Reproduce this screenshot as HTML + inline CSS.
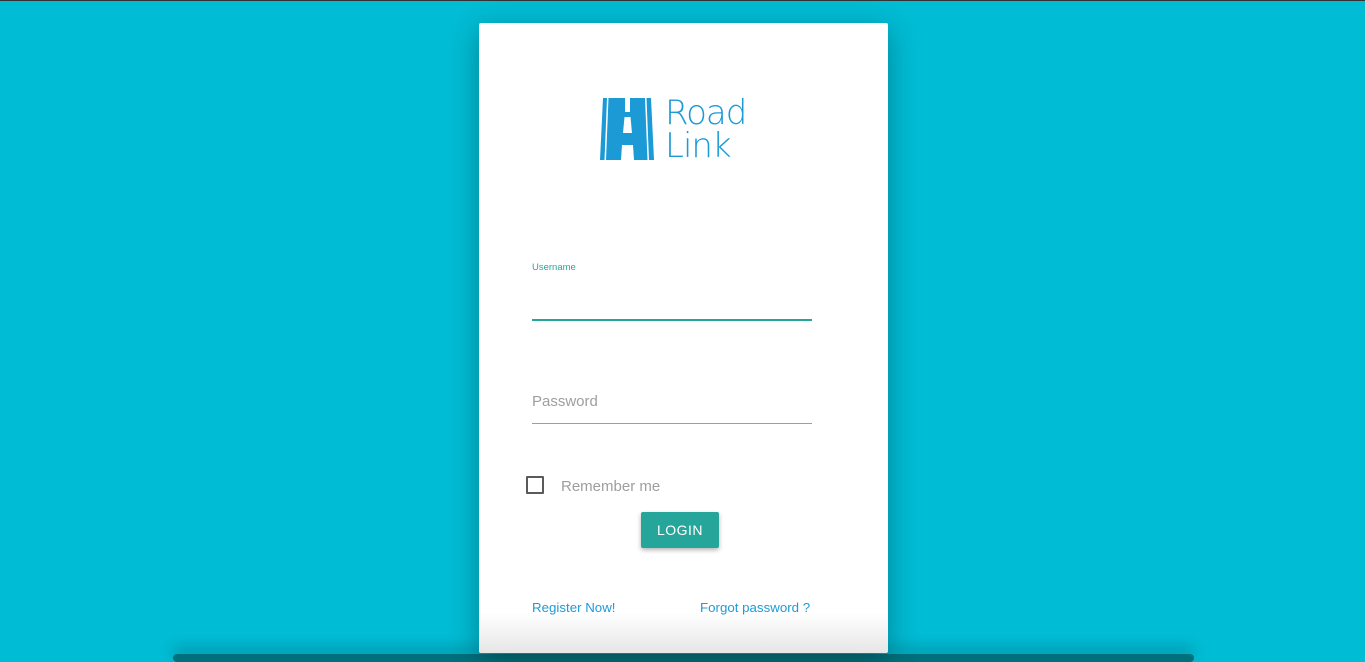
<!DOCTYPE html>
<html><head><style>
html,body{margin:0;padding:0}
body{width:1365px;height:659px;background:#00bcd4;position:relative;overflow:hidden;font-family:"Liberation Sans",sans-serif;border-top:1px solid #333;box-sizing:border-box}
.bar{position:absolute;left:173px;top:653px;width:1021px;height:8px;background:#00707c;border-radius:4px;box-shadow:0 -6px 14px rgba(0,0,0,.25)}
.card{position:absolute;left:479px;top:22px;width:409px;height:630px;background:linear-gradient(#fff 0,#fff 590px,#e6e6e6 630px);border-radius:2px;box-shadow:0 8px 30px rgba(0,0,0,.3)}
.logo{position:absolute;left:119px;top:74px}
.lt{position:absolute;font-family:"DejaVu Sans",sans-serif;font-size:34px;color:#1b9ad6;font-weight:200;letter-spacing:-1px;line-height:1}
.lab{position:absolute;left:53px;top:239px;font-size:9.5px;color:#26a69a}
.l1{position:absolute;left:53px;top:296px;width:280px;height:2px;background:#26a69a}
.pw{position:absolute;left:53px;top:370px;font-size:15px;color:#9e9e9e}
.l2{position:absolute;left:53px;top:400px;width:280px;height:1px;background:#9e9e9e}
.cb{position:absolute;left:47px;top:453px;width:14px;height:14px;border:2px solid #5a5a5a;border-radius:1px}
.rm{position:absolute;left:82px;top:455px;font-size:15px;color:#9e9e9e}
.btn{position:absolute;left:162px;top:489px;width:78px;height:36px;background:#26a69a;color:#fff;font-size:14px;text-align:center;line-height:36px;letter-spacing:.5px;border-radius:2px;box-shadow:0 2px 5px rgba(0,0,0,.3)}
.lk{position:absolute;top:577px;font-size:13.3px;color:#1e9bd7}
</style></head><body>
<div class="bar"></div>
<div class="card">
 <div class="logo">
  <svg width="58" height="64" viewBox="0 0 58 64" style="position:absolute;left:0;top:0">
   <polygon points="5,1 53,1 56,63 2,63" fill="#1b9ad6"/>
   <polygon points="9,1 10.5,1 8,63 6.5,63" fill="#fff"/>
   <polygon points="47,1 48.5,1 51,63 49.5,63" fill="#fff"/>
   <rect x="27" y="1" width="5" height="14" fill="#fff"/>
   <polygon points="26.5,20 32.5,20 34,36 25,36" fill="#fff"/>
   <polygon points="24,48 35,48 36,63 23,63" fill="#fff"/>
  </svg>
  <div class="lt" style="left:67px;top:-1px">Road</div>
  <div class="lt" style="left:67px;top:32px">Link</div>
 </div>
 <div class="lab">Username</div>
 <div class="l1"></div>
 <div class="pw">Password</div>
 <div class="l2"></div>
 <div class="cb"></div>
 <div class="rm">Remember me</div>
 <div class="btn">LOGIN</div>
 <div class="lk" style="left:53px">Register Now!</div>
 <div class="lk" style="left:221px">Forgot password ?</div>
</div>
</body></html>
